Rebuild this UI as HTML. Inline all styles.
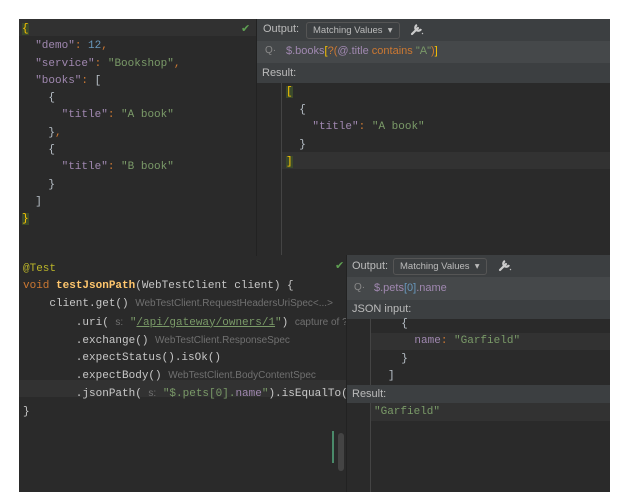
<!DOCTYPE html>
<html><head><meta charset="utf-8"><style>
*{margin:0;padding:0;box-sizing:border-box}
body{width:633px;height:495px;background:#fff;position:relative;overflow:hidden;font-family:"Liberation Sans",sans-serif}
.a{position:absolute}
.mono{font-family:"Liberation Mono",monospace;font-size:11px;white-space:pre;color:#b8c0c8}
.k{color:#a088b0}.s{color:#7a9a68}.n{color:#6897bb}.o{color:#cc7832}.y{color:#ffc66d}.g{color:#707070;font-family:"Liberation Sans",sans-serif;font-size:10px}
.hdr{color:#bbb;font-size:11px}
.dd{border:1px solid #555;border-radius:3px;background:#3c3f41;color:#bbb;font-size:9.5px;padding:2px 6px}
.b{font-weight:bold}
</style></head><body>
<div class="a" style="left:19px;top:19px;width:591px;height:473px;background:#2a2a2a"></div>
<div class="a" style="left:19px;top:19px;width:237px;height:17px;background:#313131"></div>
<div class="a" style="left:241px;top:22px;color:#5fa052;font-size:11px">✔</div>
<div class="a mono" style="left:22px;top:21px;line-height:17.3px"><span style="color:#ffc600;background:#3b4a2b">{</span>
  <span class="k">"demo"</span><span class="o">:</span> <span class="n">12</span><span class="o">,</span>
  <span class="k">"service"</span><span class="o">:</span> <span class="s">"Bookshop"</span><span class="o">,</span>
  <span class="k">"books"</span><span class="o">:</span> [
    {
      <span class="k">"title"</span><span class="o">:</span> <span class="s">"A book"</span>
    }<span class="o">,</span>
    {
      <span class="k">"title"</span><span class="o">:</span> <span class="s">"B book"</span>
    }
  ]
<span style="color:#ffc600;background:#3b4a2b">}</span></div>
<div class="a" style="left:256px;top:19px;width:354px;height:237px;background:#2a2a2a;border-left:1px solid #222"></div>
<div class="a" style="left:257px;top:19px;width:353px;height:22px;background:#3c3f41"></div>
<div class="a hdr" style="left:263px;top:23px">Output:</div>
<div class="a dd" style="left:306px;top:22px">Matching Values &nbsp;▾</div>
<svg class="a" style="left:410px;top:22px" width="14" height="14" viewBox="0 0 14 14"><path d="M2 12 L8 6" stroke="#ccc" stroke-width="2.2" stroke-linecap="round"/><path d="M7 3 A3 3 0 1 0 11 7" stroke="#ccc" stroke-width="2.2" fill="none"/><path d="M12 11 l1 1" stroke="#ccc" stroke-width="1"/></svg>
<div class="a" style="left:257px;top:41px;width:353px;height:22px;background:#45484a"></div>
<div class="a" style="left:265px;top:45px;color:#888;font-size:10px">Q·</div>
<div class="a" style="left:286px;top:45px;font-size:11px"><span class="k">$.books</span><span style="color:#ffc600">[</span><span class="o">?(</span><span class="k">@.title</span> <span class="o">contains</span> <span class="s">"A"</span><span class="o">)</span><span style="color:#ffc600">]</span></div>
<div class="a" style="left:257px;top:63px;width:353px;height:20px;background:#3c3f41"></div>
<div class="a hdr" style="left:262px;top:67px">Result:</div>
<div class="a" style="left:281px;top:83px;width:1px;height:172px;background:#444"></div>
<div class="a" style="left:282px;top:152px;width:328px;height:17px;background:#323232"></div>
<div class="a mono" style="left:286px;top:84px;line-height:17.5px"><span style="color:#ffc600;background:#3b4a2b">[</span>
  {
    <span class="k">"title"</span><span class="o">:</span> <span class="s">"A book"</span>
  }
<span style="color:#ffc600;background:#3b4a2b">]</span></div>
<div class="a" style="left:335px;top:259px;color:#5fa052;font-size:11px">✔</div>
<div class="a" style="left:19px;top:380px;width:327px;height:17px;background:#323232"></div>
<div class="a mono" style="left:23px;top:261px;line-height:17.2px;color:#c8c8c8"><span style="color:#bbb529">@Test</span>
<span class="o">void</span> <span class="y b">testJsonPath</span>(WebTestClient client) {
    client.get() <span class="g">WebTestClient.RequestHeadersUriSpec&lt;...&gt;</span>
        .uri( <span class="g">s:</span> <span class="s">"<u>/api/gateway/owners/1</u>"</span>) <span class="g">capture of ?</span>
        .exchange() <span class="g">WebTestClient.ResponseSpec</span>
        .expectStatus().isOk()
        .expectBody() <span class="g">WebTestClient.BodyContentSpec</span>
        .jsonPath( <span class="g">s:</span> <span class="s">"$.pets[0].<span class="k">name</span>"</span>).isEqualTo( <span class="g">e</span>
}</div>
<div class="a" style="left:332px;top:431px;width:2px;height:32px;background:#4a8a6a"></div>
<div class="a" style="left:338px;top:433px;width:6px;height:38px;background:#444;border-radius:3px"></div>
<div class="a" style="left:346px;top:255px;width:264px;height:237px;background:#2a2a2a;border-left:1px solid #222"></div>
<div class="a" style="left:347px;top:255px;width:263px;height:22px;background:#3c3f41"></div>
<div class="a hdr" style="left:352px;top:260px">Output:</div>
<div class="a dd" style="left:393px;top:258px">Matching Values &nbsp;▾</div>
<svg class="a" style="left:498px;top:258px" width="14" height="14" viewBox="0 0 14 14"><path d="M2 12 L8 6" stroke="#ccc" stroke-width="2.2" stroke-linecap="round"/><path d="M7 3 A3 3 0 1 0 11 7" stroke="#ccc" stroke-width="2.2" fill="none"/><path d="M12 11 l1 1" stroke="#ccc" stroke-width="1"/></svg>
<div class="a" style="left:347px;top:277px;width:263px;height:23px;background:#45484a"></div>
<div class="a" style="left:354px;top:282px;color:#888;font-size:10px">Q·</div>
<div class="a" style="left:374px;top:282px;font-size:11px"><span class="k">$.pets</span><span style="color:#6897bb">[0]</span><span class="k">.name</span></div>
<div class="a" style="left:347px;top:300px;width:263px;height:19px;background:#3c3f41"></div>
<div class="a hdr" style="left:352px;top:303px">JSON input:</div>
<div class="a" style="left:370px;top:319px;width:1px;height:66px;background:#444"></div>
<div class="a" style="left:371px;top:333px;width:239px;height:17px;background:#323232"></div>
<div class="a mono" style="left:388px;top:316px;line-height:17.3px">  {
    <span class="k">name</span><span class="o">:</span> <span class="s">"Garfield"</span>
  }
]</div>
<div class="a" style="left:347px;top:385px;width:263px;height:18px;background:#3c3f41"></div>
<div class="a hdr" style="left:352px;top:388px">Result:</div>
<div class="a" style="left:370px;top:403px;width:1px;height:89px;background:#444"></div>
<div class="a" style="left:371px;top:403px;width:239px;height:18px;background:#323232"></div>
<div class="a mono" style="left:374px;top:406px"><span class="s">"Garfield"</span></div>
</body></html>
